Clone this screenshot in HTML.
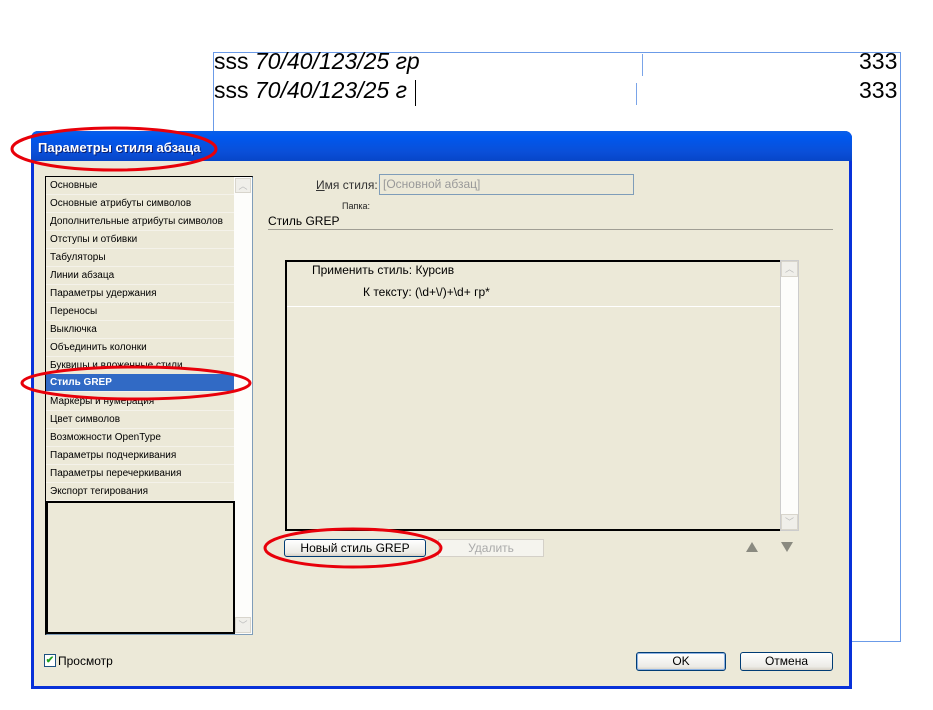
<!DOCTYPE html>
<html><head><meta charset="utf-8"><style>
*{box-sizing:border-box;margin:0;padding:0}
body{width:933px;height:710px;background:#fff;position:relative;overflow:hidden;font-family:"Liberation Sans",Arial,sans-serif;font-size:11px;color:#000}
.a{position:absolute}
.big{font-family:"Liberation Sans",Arial,sans-serif;font-size:23px;white-space:nowrap}
.row{position:absolute;left:0;width:188px;height:18px;line-height:17px;padding-left:4px;font-size:10px;border-bottom:1px solid #f4f2ea;white-space:nowrap}
.btn{position:absolute;border:1px solid #003c74;border-radius:3px;background:linear-gradient(#fff,#ecebe6 80%,#d6d0c5);text-align:center;font-size:11px}
</style></head><body>
<div class="a" style="left:213px;top:52px;width:688px;height:590px;border:1px solid #6b9be8"></div>
<div class="a big" style="left:214px;top:48px">sss <i>70/40/123/25 гр</i></div>
<div class="a big" style="left:214px;top:77px">sss <i>70/40/123/25 г</i></div>
<div class="a" style="left:415px;top:80px;width:1px;height:26px;background:#000"></div>
<div class="a big" style="left:859px;top:48px">333</div>
<div class="a big" style="left:859px;top:77px">333</div>
<div class="a" style="left:642px;top:54px;width:1px;height:22px;background:#7aa4e8"></div>
<div class="a" style="left:636px;top:83px;width:1px;height:22px;background:#7aa4e8"></div>
<div class="a" style="left:31px;top:131px;width:821px;height:558px;background:#ece9d8;border:3px solid #0831d9;border-top:none;border-radius:7px 7px 0 0"></div>
<div class="a" style="left:31px;top:131px;width:821px;height:30px;border-radius:7px 7px 0 0;background:linear-gradient(#0a5fe8,#0058ee 20%,#0a4fd8 70%,#0746c8)"></div>
<div class="a" style="left:38px;top:140px;color:#fff;font-size:13px;font-weight:bold;font-family:'Liberation Sans Narrow','Liberation Sans',sans-serif;text-shadow:1px 1px #0a1e6e">Параметры стиля абзаца</div>
<div class="a" style="left:45px;top:176px;width:208px;height:459px;border:1px solid #7f9db9;background:#fff;border-left:2px solid #000;border-top:2px solid #000"></div>
<div class="a" style="left:234px;top:177px;width:18px;height:457px;background:#fdfdfb"></div>
<div class="a" style="left:235px;top:178px;width:16px;height:15px;border:1px solid #d8d5cc;background:#f0efea;color:#bbb;font-size:9px;text-align:center">︿</div>
<div class="a" style="left:235px;top:617px;width:16px;height:16px;border:1px solid #d8d5cc;background:#f0efea;color:#bbb;font-size:9px;text-align:center">﹀</div>
<div class="a" style="left:46px;top:177px;width:188px;height:324px;background:#ece9d8">
<div class="row" style="top:0">Основные</div>
<div class="row" style="top:18px">Основные атрибуты символов</div>
<div class="row" style="top:36px">Дополнительные атрибуты символов</div>
<div class="row" style="top:54px">Отступы и отбивки</div>
<div class="row" style="top:72px">Табуляторы</div>
<div class="row" style="top:90px">Линии абзаца</div>
<div class="row" style="top:108px">Параметры удержания</div>
<div class="row" style="top:126px">Переносы</div>
<div class="row" style="top:144px">Выключка</div>
<div class="row" style="top:162px">Объединить колонки</div>
<div class="row" style="top:180px">Буквицы и вложенные стили</div>
<div class="row" style="top:197px;background:#316ac5;color:#fff;font-weight:bold">Стиль GREP</div>
<div class="row" style="top:216px">Маркеры и нумерация</div>
<div class="row" style="top:234px">Цвет символов</div>
<div class="row" style="top:252px">Возможности OpenType</div>
<div class="row" style="top:270px">Параметры подчеркивания</div>
<div class="row" style="top:288px">Параметры перечеркивания</div>
<div class="row" style="top:306px">Экспорт тегирования</div>
</div>
<div class="a" style="left:46px;top:501px;width:189px;height:133px;border:2px solid #000;background:#ece9d8"></div>
<div class="a" style="left:316px;top:178px;font-size:12px;color:#333"><u>И</u>мя стиля:</div>
<div class="a" style="left:379px;top:174px;width:255px;height:21px;border:1px solid #7f9db9;color:#999;font-size:12px;padding:2px 3px">[Основной абзац]</div>
<div class="a" style="left:342px;top:201px;font-size:9px;color:#222">Папка:</div>
<div class="a" style="left:268px;top:214px;font-size:12px">Стиль GREP</div>
<div class="a" style="left:268px;top:229px;width:565px;height:1px;background:#a09e94"></div>
<div class="a" style="left:285px;top:260px;width:497px;height:271px;border:2px solid #000"></div>
<div class="a" style="left:287px;top:306px;width:493px;height:1px;background:#fff"></div>
<div class="a" style="left:312px;top:263px;font-size:12px">Применить стиль: Курсив</div>
<div class="a" style="left:363px;top:285px;font-size:12px">К тексту: (\d+\/)+\d+ гр*</div>
<div class="a" style="left:780px;top:260px;width:19px;height:271px;background:#fdfdfb;border:1px solid #ccc"></div>
<div class="a" style="left:781px;top:261px;width:17px;height:16px;border:1px solid #d8d5cc;background:#f0efea;color:#bbb;font-size:9px;text-align:center">︿</div>
<div class="a" style="left:781px;top:514px;width:17px;height:16px;border:1px solid #d8d5cc;background:#f0efea;color:#bbb;font-size:9px;text-align:center">﹀</div>
<div class="btn" style="left:284px;top:539px;width:142px;height:18px;line-height:16px;font-size:12px">Новый стиль GREP</div>
<div class="a" style="left:438px;top:539px;width:106px;height:18px;border:1px solid #d4d0c8;background:#f5f4ee;color:#aaa;text-align:center;line-height:16px;font-size:12px">Удалить</div>
<div class="a" style="left:746px;top:542px;width:0;height:0;border-left:6px solid transparent;border-right:6px solid transparent;border-bottom:10px solid #8a8a80"></div>
<div class="a" style="left:781px;top:542px;width:0;height:0;border-left:6px solid transparent;border-right:6px solid transparent;border-top:10px solid #8a8a80"></div>
<div class="a" style="left:44px;top:654px;width:12px;height:13px;border:1px solid #1c5180;background:#fff;color:#21a121;font-size:10px;line-height:11px;text-align:center;font-weight:bold">✔</div>
<div class="a" style="left:58px;top:654px;font-size:12px">Просмотр</div>
<div class="btn" style="left:636px;top:652px;width:90px;height:19px;line-height:17px;font-size:12px;box-shadow:inset 0 0 0 1px #8db2e3">OK</div>
<div class="btn" style="left:740px;top:652px;width:93px;height:19px;line-height:17px;font-size:12px">Отмена</div>
<svg class="a" style="left:0;top:0" width="933" height="710">
<g fill="none" stroke="#e8000a" stroke-width="3">
<ellipse cx="114" cy="149" rx="102" ry="21"/>
<ellipse cx="136" cy="383" rx="114" ry="16"/>
<ellipse cx="353" cy="548" rx="88" ry="19"/>
</g></svg>
</body></html>
